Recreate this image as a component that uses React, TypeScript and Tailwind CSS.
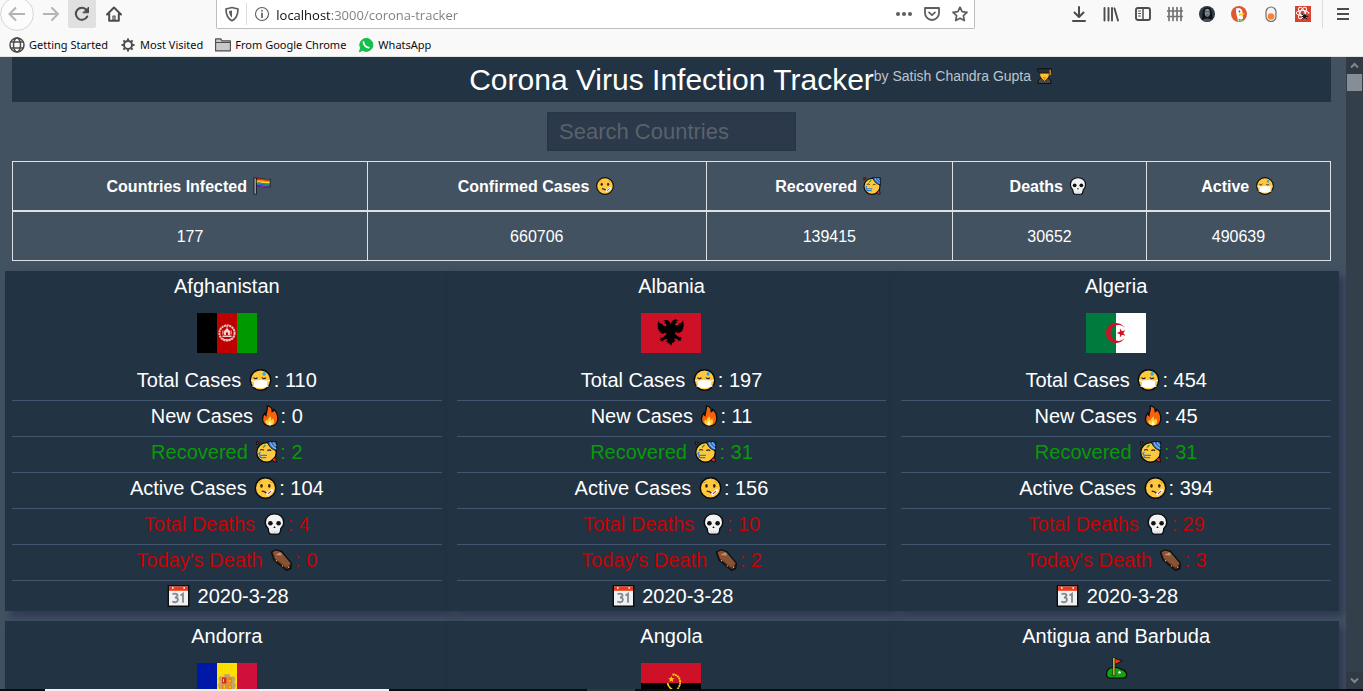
import { useState, type ReactNode } from 'react';

type EmojiName = 'mask' | 'fire' | 'party' | 'sick' | 'skull' | 'coffin' | 'calendar' | 'golf' | 'rainbow' | 'student';

const emojiArt: Record<EmojiName, ReactNode> = {
  mask: (
    <>
      <circle cx="11" cy="11" r="10.2" fill="#ffc83d" stroke="#0b0d10" strokeWidth="1.4" />
      <path d="M1.6 11.4 6 12.6M20.4 11.4 16 12.6M3 17l4 0.6M19 17l-4 0.6" stroke="#f6efe0" strokeWidth="1.3" />
      <path d="M4.400 12c4.200-1.500 9-1.500 13.200 0v4.600c-2 3.600-11.200 3.600-13.200 0z" fill="#fff" />
      <path d="M4 8.600c.8 1.400 3 1.400 3.900 0M12.400 8.600c.8 1.400 3 1.400 3.900 0" fill="none" stroke="#2a2320" strokeWidth="1.1" />
      <path d="M14.600 2.600c1.400 1.600 1.900 2.600 1.400 3.500-.6 1-2.200 1-2.800 0-.5-.9 0-1.900 1.400-3.500z" fill="#27a9e8" />
    </>
  ),
  fire: (
    <>
      <path d="M8.200.8c3.600.4 5.200 3.200 5 5.800 1-.4 1.500-1.200 1.600-2.200 2.800 2.400 4.200 6 4 9.400-.2 4.600-3.400 7.400-7.600 7.400s-7.600-2.800-7.700-7c-.1-2.600 1-4.600 2.300-6.200.1 1.200.5 2 1.200 2.500C6.800 7.400 9.400 4.200 8.200.8z" fill="#f7630c" stroke="#0b0d10" strokeWidth="1.300" />
      <path d="M11.300 11.200c1 1.400.9 2.600.9 3.600 1-.2 1.600-.8 1.900-1.600 1.600 2.800 1.300 7.300-3.200 7.300-3.700 0-5.300-2.800-3.900-5.900.4.7.8 1 1.500 1.200.2-1.900 1.600-3 2.800-4.600z" fill="#ffd23d" />
      <path d="M11 16c1.500 1.400 1.800 4.200 0 4.300-2 0-1.800-2.700 0-4.300z" fill="#fff4c2" />
    </>
  ),
  party: (
    <>
      <circle cx="11" cy="11.400" r="9.800" fill="#ffc83d" stroke="#0b0d10" strokeWidth="1.400" />
      <path d="M12 .8H21.200V9.600C16.800 9 13.400 5.600 12 .8z" fill="#2f6fc0" stroke="#0b0d10" strokeWidth="1" />
      <path d="M14.600 1.300c1 3.200 3.200 5.400 6.200 6.400M17.800 1.200c.5 1.800 1.600 2.900 3 3.500" fill="none" stroke="#7db7ef" strokeWidth="1.200" />
      <path d="M4.800 9.600c.7-1.500 2.800-1.500 3.500 0M12 10c.7-1.500 2.800-1.500 3.500 0" fill="none" stroke="#33261c" strokeWidth="1.200" />
      <path d="M11.500 14.400H5.400c-2.400 0-2.400-3-.4-3M5.400 14.400c-1.400.6-1 2.200.4 2.200h5" fill="none" stroke="#2f7fd2" strokeWidth="1.400" />
      <path d="m7.500 6.500 2.500-2.500" stroke="#2ea343" strokeWidth="1.500" />
      <path d="M.9.900 4 1.300 1.300 4zM16.800 18.300l3.300-2.300 1 5-3.200-.4z" fill="#df2a20" stroke="#0b0d10" strokeWidth=".9" />
    </>
  ),
  sick: (
    <>
      <circle cx="11" cy="11" r="10.200" fill="#ffc83d" stroke="#0b0d10" strokeWidth="1.400" />
      <ellipse cx="7" cy="8.800" rx="1.300" ry="1.900" fill="#2a2320" />
      <ellipse cx="14.800" cy="8.800" rx="1.300" ry="1.900" fill="#2a2320" />
      <path d="M3.800 6c1.400-.3 2.400-1 3-2M15 4c.6 1 1.600 1.700 3 2" fill="none" stroke="#d8952a" strokeWidth="1" />
      <path d="M7.200 14.200c1.900.1 3.300.6 4.800 2" fill="none" stroke="#33261c" strokeWidth="1.300" />
      <path d="m13.200 17 4.300-3.600" stroke="#f6f6f6" strokeWidth="3" strokeLinecap="round" />
      <path d="m13.400 16.800 3.100-2.600" stroke="#d8262c" strokeWidth="1.100" />
    </>
  ),
  skull: (
    <>
      <path d="M11 .9c5.600 0 9.200 3.600 9.200 8.300 0 2.700-.8 4.500-2.300 5.600-.7.5-.8 1.200-.8 2.200-.1 2.600-.8 4.100-2.900 4.100H7.800c-2.100 0-2.800-1.500-2.900-4.100 0-1-.1-1.700-.8-2.200-1.500-1.100-2.300-2.900-2.300-5.600C1.800 4.500 5.400.9 11 .9z" fill="#f2f2f2" stroke="#0b0d10" strokeWidth="1.400" />
      <circle cx="6.900" cy="10.200" r="2.300" fill="#111" />
      <circle cx="15.100" cy="10.200" r="2.300" fill="#111" />
      <path d="m11 13 1.200 2H9.800z" fill="#111" />
      <path d="M8.700 17.800v2.600M11 17.800v2.600M13.300 17.800v2.600" stroke="#c9ccd1" strokeWidth=".8" />
    </>
  ),
  coffin: (
    <>
      <path d="M1 3.200 5.600.9l5.600 1.800 9.600 11.400-.6 5.400-4.200 1.800L3.600 11z" fill="#4d2e1e" stroke="#0b0d10" strokeWidth="1.400" strokeLinejoin="round" />
      <path d="M2.200 3 5.800 1.500l5 1.700 9.400 11.300-4.400 3.900L4.400 9.200z" fill="#8a5234" />
      <path d="M6 5.800 11 4.600M9 3.800l1 3" stroke="#e08a7a" strokeWidth="1.400" />
      <path d="m9.800 6.200 1.800-.6" stroke="#41a84a" strokeWidth="1.300" />
      <path d="m5.500 11.400.9.600M11.500 16.700l.9.600M17.500 18.400l1-.5" stroke="#e6b45a" strokeWidth="1.300" />
    </>
  ),
  calendar: (
    <>
      <path d="M.8.800H21.200V21.200H.8z" fill="#f0f1f2" stroke="#0b0d10" strokeWidth="1.400" />
      <path d="M1.500 1.500h19V5.800h-19z" fill="#f03a17" />
      <path d="M4.500 2.200h1.600v1.600H4.500zM15.900 2.200h1.600v1.600h-1.600z" fill="#fff" />
      <path d="M5 9.300c2.600-1.500 5.600-.4 4.900 1.800-.3 1-1.300 1.400-2.500 1.400 1.700 0 3 .6 3 2.200 0 2.500-3.600 3.100-5.600 1.900M13 10.500l2.500-1.700v9" fill="none" stroke="#85898d" strokeWidth="1.800" />
    </>
  ),
  golf: (
    <>
      <path d="M1 17c0-4 2.500-6.600 7-6.400 3.600-.6 6 .6 8 1.800 3.300 1 5.100 3 5.100 5.400 0 2.200-1.500 3.400-4 3.400H5C2.300 21.200 1 19.700 1 17z" fill="#16a016" stroke="#0b0d10" strokeWidth="1.300" />
      <path d="M9.200 1.200 16.800 4 9.200 7.500z" fill="#ef3a1d" stroke="#0b0d10" strokeWidth=".9" />
      <ellipse cx="8" cy="18.300" rx="2.800" ry="1" fill="#0d6e1a" />
      <path d="M8.400.8v17" stroke="#0b0d10" strokeWidth="2.600" />
      <path d="M8.400 1v17" stroke="#f4d030" strokeWidth="1.400" />
      <circle cx="14" cy="15.400" r="1.200" fill="#fff" />
    </>
  ),
  rainbow: (
    <>
      <path d="M3 1.500c6-2.300 9 2 18.300.6V12.600c-8 1.600-11-2-18.300-.2z" fill="#0b0d10" />
      <path d="M3.500 3c6-2 9 1.700 17 .6" fill="none" stroke="#e5242a" strokeWidth="1.900" />
      <path d="M3.500 4.700c6-2 9 1.700 17 .6" fill="none" stroke="#f98b1d" strokeWidth="1.900" />
      <path d="M3.500 6.400c6-2 9 1.700 17 .6" fill="none" stroke="#fde331" strokeWidth="1.900" />
      <path d="M3.500 8.100c6-2 9 1.700 17 .6" fill="none" stroke="#16a73b" strokeWidth="1.900" />
      <path d="M3.500 9.800c6-2 9 1.700 17 .6" fill="none" stroke="#2a6ae0" strokeWidth="1.900" />
      <path d="M3.500 11.400c6-2 9 1.700 17 .6" fill="none" stroke="#8b2fb0" strokeWidth="1.400" />
      <path d="M2.600.6V21.400" stroke="#0b0d10" strokeWidth="3.800" />
      <path d="M2.600 1.400V20.600" stroke="#c3c8cd" strokeWidth="1.500" />
    </>
  ),
  student: (
    <>
      <path d="M2 21.300c0-4 1.200-6.500 4.600-7.800h8.800c3.400 1.300 4.600 3.800 4.600 7.800z" fill="#45484b" stroke="#0b0d10" strokeWidth="1.300" />
      <path d="M4.600 5.500h12.800v5.300c-1.400 3-3.600 5.400-6.400 7.400-2.800-2-5-4.400-6.400-7.400z" fill="#ffc22e" stroke="#0b0d10" strokeWidth=".8" />
      <path d="M1.500 1h19v3.200L16.800 7H5.200L1.500 4.200z" fill="#2b2e30" stroke="#0b0d10" strokeWidth="1.200" />
      <path d="M18.800 2.500v7" stroke="#e8a51c" strokeWidth="1.600" />
      <path d="m8.500 12.500 2.500 5 2.500-5z" fill="#e98f0c" />
    </>
  ),
};

const emojiSizes = {
  sm: 'inline-block h-4 w-[19px] align-[-3px]',
  md: 'inline-block h-[18px] w-[22px] align-[-3px]',
  lg: 'inline-block h-[22px] w-[27px] align-[-4px]',
  lgNarrow: 'inline-block h-[22px] w-[22px] align-[-4px]',
};

function Emoji({ name, size }: { name: EmojiName; size: keyof typeof emojiSizes }) {
  return (
    <svg viewBox="0 0 22 22" className={emojiSizes[size]} aria-hidden="true">
      {emojiArt[name]}
    </svg>
  );
}

/* ---------- Flags ---------- */

function Flag({ children }: { children: ReactNode }) {
  return (
    <svg viewBox="0 0 60 40" className="my-3 block h-10 w-[60px]" aria-hidden="true">
      {children}
    </svg>
  );
}

const star = (cx: number, cy: number, r: number, rot: number) =>
  Array.from({ length: 10 }, (_, i) => {
    const a = ((i * 36 + rot) * Math.PI) / 180;
    const d = i % 2 === 0 ? r : r * 0.4;
    return `${(cx + d * Math.cos(a)).toFixed(2)},${(cy + d * Math.sin(a)).toFixed(2)}`;
  }).join(' ');

const afghanistan = (
  <Flag>
    <path d="M0 0h20v40H0z" fill="#000" />
    <path d="M20 0h20v40H20z" fill="#bf0000" />
    <path d="M40 0h20v40H40z" fill="#009900" />
    <circle cx="30" cy="20" r="7.600" fill="none" stroke="#f0c4c0" strokeWidth="2" strokeDasharray="2.200 .5" />
    <path d="M25.500 22.500h9v1.600h-9zM27 22v-4l3-3 3 3v4h-2v-2.500h-2V22zM29.600 13h.8v2.500h-.8zM25.400 17.500h1v4h-1zM33.600 17.500h1v4h-1z" fill="#f3cfcb" />
    <path d="M26 25.800c2.500 1.400 5.500 1.400 8 0" fill="none" stroke="#f3cfcb" />
  </Flag>
);

const albania = (
  <Flag>
    <path d="M0 0h60v40H0z" fill="#ce1126" />
    <g transform="translate(30 20) scale(1.200 1.140) translate(-30 -18.800)">
      <path
        d="M30 12c-.5-2.500-1.500-4.300-4-4.600-1.300-.1-2 .5-2.300 1.200 1.200-.2 2 .2 2.100.9-.7-.2-1.300 0-1.700.6 1.500.2 2.300 1 2.100 2.200-1.300 1-3.200.4-3.400-1.300-2-.4-3.100-1.500-3.200-3-.6 1.200-.5 2.200.1 3l-1-.3c0 .9.400 1.500.9 2l-1 .1c.2.800.7 1.300 1.300 1.600l-1.100.4c.4.700.9 1 1.600 1.100l-1.100.8c.6.500 1.200.6 1.900.5l-.9 1.200c.8.100 1.400 0 2-.4l-.6 1.500c.9-.1 1.500-.6 1.900-1.200l-.1 1.500c.8-.4 1.100-1 1.300-1.700l.6 1.400c.5-.5.6-1 .6-1.600.6.9.3 2-.6 2.900l-2.600 2.300-1.900-.5.8 1.500-1.600.2 1.600.8-.6 1.300 1.600-.8.600 1.100.6-1.700 3-1.200-.3 1.800-1.400.8 2.100.3-.3 1.500 1.400-.7L30 30l1.200-3 1.400.7-.3-1.500 2.100-.3-1.400-.8-.3-1.800 3 1.200.6 1.700.6-1.100 1.600.8-.6-1.300 1.600-.8-1.600-.2.800-1.500-1.900.5-2.600-2.300c-.9-.9-1.200-2-.6-2.900 0 .6.100 1.100.6 1.600l.6-1.400c.2.700.5 1.300 1.300 1.700l-.1-1.500c.4.600 1 1.100 1.900 1.200l-.6-1.500c.6.400 1.200.5 2 .4l-.9-1.200c.7.100 1.300 0 1.900-.5l-1.100-.8c.7-.1 1.200-.4 1.600-1.100l-1.100-.4c.6-.3 1.100-.8 1.300-1.600l-1-.1c.5-.5.900-1.100.9-2l-1 .3c.6-.8.7-1.800.1-3-.1 1.500-1.200 2.600-3.200 3-.2 1.700-2.100 2.300-3.400 1.300-.2-1.200.6-2 2.100-2.200-.4-.6-1-.8-1.700-.6.1-.7.900-1.100 2.100-.9-.3-.7-1-1.300-2.300-1.200-2.500.3-3.500 2.100-4 4.600z"
        fill="#000"
      />
    </g>
  </Flag>
);

const algeria = (
  <Flag>
    <path d="M0 0h30v40H0z" fill="#007a3d" />
    <path d="M30 0h30v40H30z" fill="#fff" />
    <path d="M38.700 15a10 10 0 1 0 0 10 8 8 0 1 1 0-10z" fill="#ce1126" />
    <polygon points={star(35.4, 20, 4.8, 180)} fill="#ce1126" />
  </Flag>
);

const andorra = (
  <Flag>
    <path d="M0 0h20v40H0z" fill="#0018a8" />
    <path d="M20 0h20v40H20z" fill="#fedf00" />
    <path d="M40 0h20v40H40z" fill="#d0103a" />
    <path d="M23 13l3 1 2-3h4l2 3 3-1 1.500 3-1.200 3 1.700 3-1.500 5-4 4h-7l-4-4-1.500-5 1.700-3-1.200-3z" fill="#c6a46a" />
    <path d="M25 14.500h4.500v6H25z" fill="#d52b1e" />
    <path d="M30.500 14.500H35v6h-4.500zM25 21.500h4.500v5H25zM30.500 21.500H35v5h-4.500z" fill="#e8841a" />
    <path d="M26.500 16v3M31.500 18H34M27.200 22v4M32 24h2" stroke="#fedf00" />
  </Flag>
);

const angola = (
  <Flag>
    <path d="M0 0h60v20H0z" fill="#ce1126" />
    <path d="M0 20h60v20H0z" fill="#000" />
    <path d="M31.500 11.500c5.800 0 8 4.500 7.600 9-.4 3-2 5.600-4.600 7" fill="none" stroke="#f9d616" strokeWidth="1.800" strokeDasharray="2 .5" />
    <path d="M26.500 20c.8 4.500 5 8 10.500 8.200" fill="none" stroke="#f9d616" strokeWidth="1.600" />
    <polygon points={star(30.3, 16.3, 3.4, -90)} fill="#f9d616" />
  </Flag>
);

/* ---------- Browser toolbar ---------- */

function ToolButton({ label, className = '', children }: { label: string; className?: string; children: ReactNode }) {
  return (
    <button type="button" aria-label={label} className={`flex h-7 shrink-0 items-center justify-center text-[#4c4c4f] ${className}`}>
      {children}
    </button>
  );
}

function Glyph({ children }: { children: ReactNode }) {
  return (
    <svg viewBox="0 0 16 16" className="size-4 shrink-0" fill="none" stroke="currentColor" strokeWidth="2" strokeLinecap="round" strokeLinejoin="round" aria-hidden="true">
      {children}
    </svg>
  );
}

const extensions: { label: string; art: ReactNode }[] = [
  { label: 'Downloads', art: <path d="M8 1v9M3.500 6.500 8 11l4.500-4.500M2 15h12" /> },
  { label: 'Library', art: <path d="M1.500 2v12.500M5.500 2v12.500M9 2v12.500M11.500 2.500l3.500 12" strokeWidth="1.900" /> },
  {
    label: 'Sidebars',
    art: (
      <>
        <rect x="1" y="2" width="14" height="12" rx="2" strokeWidth="1.900" />
        <path d="M8 2v12" strokeWidth="1.500" />
        <path d="M3.500 5h2M3.500 7.500h2M3.500 10h2" strokeWidth="1" />
      </>
    ),
  },
  { label: 'Containers', art: <path d="M2 1.500v13M6 1.500v13M10 1.500v13M14 1.500v13M.5 5h15M.5 10.500h15" stroke="#737376" strokeWidth="1.700" /> },
  {
    label: 'Profile',
    art: (
      <g stroke="none">
        <circle cx="8" cy="8" r="8" fill="#2d3b46" />
        <path d="M3 14C3.500 9 3 2 8 1.500s5 6 5.500 11.500z" fill="#0e1216" />
        <ellipse cx="8.300" cy="6.800" rx="2.600" ry="4" fill="#8b9092" />
        <path d="M6.500 5.800h1.400M9 5.800h1.400M7.500 8.900h1.800" stroke="#30373c" strokeWidth=".8" />
        <path d="M3.500 14.200c1.400-2.400 7-2.400 9 0-2.600 2-6.400 2-9 0z" fill="#42505a" />
      </g>
    ),
  },
  {
    label: 'DuckDuckGo',
    art: (
      <g stroke="none">
        <circle cx="8" cy="8" r="8" fill="#de5833" />
        <path d="M5 2.500c3-1.500 6 0 6.500 3.500l.5 7.500c-1.500 1.500-3.500 2-5 1.500C6.500 11 4.500 7 5 2.500z" fill="#fff" />
        <circle cx="8.500" cy="5.500" r=".9" fill="#2d4f8e" />
        <path d="M8 8c2-.8 4-1 6-.4-1.500 1.600-4 2.400-6 2.200z" fill="#fdd20a" />
        <path d="m7.500 12.500 2.500 1 2.500-1v2.600l-2.500-.7-2 .8z" fill="#4cba3c" />
      </g>
    ),
  },
  {
    label: 'Toggle',
    art: (
      <>
        <rect x="3" y="1" width="10" height="14.500" rx="5" stroke="#6d6d70" strokeWidth="1.200" fill="#f4f4f5" />
        <circle cx="8" cy="10.500" r="3.300" fill="#fb8332" stroke="none" />
      </>
    ),
  },
  {
    label: 'React Developer Tools',
    art: (
      <>
        <path d="M0 0h16v16H0z" fill="#d8402f" stroke="none" />
        <g stroke="#fff" strokeWidth="1">
          <ellipse cx="7.500" cy="7" rx="6.300" ry="2.500" />
          <ellipse cx="7.500" cy="7" rx="6.300" ry="2.500" transform="rotate(60 7.500 7)" />
          <ellipse cx="7.500" cy="7" rx="6.300" ry="2.500" transform="rotate(120 7.500 7)" />
        </g>
        <path d="M7 8l5 5M12.500 8l-5 5M7 10.500h5.500" stroke="#231615" strokeWidth="1" />
        <ellipse cx="9.800" cy="10.500" rx="1.900" ry="2.500" fill="#231615" stroke="none" />
      </>
    ),
  },
];

const bookmarks: { label: string; icon: ReactNode }[] = [
  {
    label: 'Getting Started',
    icon: (
      <Glyph>
        <g strokeWidth="1.500">
          <circle cx="8" cy="8" r="7" />
          <ellipse cx="8" cy="8" rx="3.500" ry="7" />
          <path d="M2 5h12M2 11h12" />
        </g>
      </Glyph>
    ),
  },
  {
    label: 'Most Visited',
    icon: (
      <Glyph>
        <circle cx="8" cy="8" r="4" />
        <path d="M8 1.500v2M8 12.500v2M1.500 8h2M12.500 8h2M3.400 3.400l1.400 1.400M11.200 11.200l1.400 1.400M12.600 3.400l-1.400 1.400M4.800 11.200l-1.400 1.400" strokeLinecap="butt" />
      </Glyph>
    ),
  },
  {
    label: 'From Google Chrome',
    icon: (
      <Glyph>
        <path d="M.6 1.900h5.200l1.200 2h8.400v10H.6z" fill="#c9c9cb" strokeWidth="1.100" />
        <path d="M.8 5.500h14.400" strokeWidth="1" />
      </Glyph>
    ),
  },
  {
    label: 'WhatsApp',
    icon: (
      <Glyph>
        <path d="M1.500 14.500 2.600 11A6.500 6.500 0 1 1 5 13.500z" fill="#12bf47" stroke="#12bf47" strokeWidth="1" />
        <path d="M5.500 5.200c.2 2.600 2.600 5 5.200 5.400" stroke="#fff" strokeWidth="1.900" />
      </Glyph>
    ),
  },
];

function BrowserChrome() {
  return (
    <div className="shrink-0 border-b border-[#e3e6e1] bg-[#f9f9fa]">
      <div className="flex h-[30px] items-start">
        <ToolButton label="Back" className="w-[34px]">
          <svg viewBox="0 0 34 34" className="-my-1 size-[34px] shrink-0" fill="none" aria-hidden="true">
            <circle cx="17" cy="17" r="16.400" fill="#fcfcfc" stroke="#d5d5d7" />
            <path d="M25 17H10M16 10.500 9.500 17l6.500 6.500" stroke="#b4b4b6" strokeWidth="2" />
          </svg>
        </ToolButton>
        <ToolButton label="Forward" className="w-[34px]">
          <Glyph>
            <path d="M0 8h15M9 2l6 6-6 6" stroke="#b4b4b6" />
          </Glyph>
        </ToolButton>
        <ToolButton label="Reload" className="w-7 rounded-b-[2px] bg-[#e0e0e1]">
          <Glyph>
            <path d="M13.200 10.500A6 6 0 1 1 12.500 4" />
            <path d="M14.500 1.500v5.300H9.200z" fill="currentColor" strokeWidth="1" />
          </Glyph>
        </ToolButton>
        <ToolButton label="Home" className="-mr-1 w-9">
          <Glyph>
            <path d="M1 8.500 8 1.500l7 7M3.200 8v6.800h9.600V8" />
            <path d="M7 10h2v4H7z" strokeWidth="1.200" />
          </Glyph>
        </ToolButton>
        <div className="flex-[2]" />
        <div className="flex h-[29px] flex-[17] items-center rounded-b-[2px] border border-t-0 border-[#bdbdbf] bg-white pr-1.5 text-[#5e5e61]">
          <span className="flex w-[29px] justify-center">
            <Glyph>
              <path d="M8 1.500 14 3c0 5.500-1.500 9.500-6 11.800C3.500 12.500 2 8.500 2 3z" strokeWidth="1.700" />
              <path d="M8 4.500v7.200C6 10 5.200 8 5 5z" fill="currentColor" stroke="none" />
            </Glyph>
          </span>
          <span className="h-[22px] w-px bg-[#dededf]" />
          <span className="flex w-[29px] justify-center">
            <Glyph>
              <circle cx="8" cy="8" r="6.500" strokeWidth="1.100" />
              <path d="M8 7.300v4M8 4.700v.1" strokeWidth="1.700" />
            </Glyph>
          </span>
          <input
            type="text"
            aria-label="Address"
            defaultValue="localhost:3000/corona-tracker"
            className="min-w-0 flex-1 bg-[linear-gradient(90deg,#0c0c0d_54px,#7c7c80_54px)] bg-clip-text pt-0.5 font-['Open_Sans',sans-serif] text-[13px] leading-5 text-transparent outline-none"
          />
          <div className="flex gap-3">
            <button type="button" aria-label="Page actions">
              <Glyph>
                <g fill="currentColor" stroke="none">
                  <circle cx="2" cy="8" r="2" />
                  <circle cx="8" cy="8" r="2" />
                  <circle cx="14" cy="8" r="2" />
                </g>
              </Glyph>
            </button>
            <button type="button" aria-label="Save to Pocket">
              <Glyph>
                <path d="M1 2h14v5a7 7 0 0 1-14 0z" strokeWidth="1.800" />
                <path d="M5 6.300 8 9.200l3-2.900" strokeWidth="1.700" />
              </Glyph>
            </button>
            <button type="button" aria-label="Bookmark this page">
              <Glyph>
                <path d="m8 1.200 2.100 4.500 4.900.6-3.600 3.400.9 4.900L8 12.200l-4.300 2.400.9-4.900L1 6.300l4.900-.6z" strokeWidth="1.700" />
              </Glyph>
            </button>
          </div>
        </div>
        <div className="flex-[2]" />
        {extensions.map((e) => (
          <ToolButton key={e.label} label={e.label} className="w-8">
            <Glyph>{e.art}</Glyph>
          </ToolButton>
        ))}
        <ToolButton label="Menu" className="ml-[3px] w-[41px] border-l border-[#dcdcdd]">
          <svg viewBox="0 0 12 12" className="size-3" stroke="currentColor" strokeWidth="2" aria-hidden="true">
            <path d="M0 1h12M0 6h12M0 11h12" />
          </svg>
        </ToolButton>
      </div>
      <nav className="flex h-[26px] items-center gap-3 pt-[3px] pl-[9px] font-['Noto_Sans',sans-serif]">
        {bookmarks.map((b) => (
          <a key={b.label} href="#" className="flex items-center gap-1 text-[11px] leading-4 whitespace-nowrap text-[#0c0c0d]">
            <span className="text-[#4c4c4f]">{b.icon}</span>
            {b.label}
          </a>
        ))}
      </nav>
    </div>
  );
}

/* ---------- Tracker page ---------- */

const totals: { label: string; emoji: EmojiName; value: number }[] = [
  { label: 'Countries Infected', emoji: 'rainbow', value: 177 },
  { label: 'Confirmed Cases', emoji: 'sick', value: 660706 },
  { label: 'Recovered', emoji: 'party', value: 139415 },
  { label: 'Deaths', emoji: 'skull', value: 30652 },
  { label: 'Active', emoji: 'mask', value: 490639 },
];

type Country = { name: string; flag?: ReactNode; stats: number[] };

const countries: Country[] = [
  { name: 'Afghanistan', flag: afghanistan, stats: [110, 0, 2, 104, 4, 0] },
  { name: 'Albania', flag: albania, stats: [197, 11, 31, 156, 10, 2] },
  { name: 'Algeria', flag: algeria, stats: [454, 45, 31, 394, 29, 3] },
  { name: 'Andorra', flag: andorra, stats: [] },
  { name: 'Angola', flag: angola, stats: [] },
  { name: 'Antigua and Barbuda', stats: [] },
];

const statRows: { label: string; emoji: EmojiName; size: keyof typeof emojiSizes; color: string }[] = [
  { label: 'Total Cases', emoji: 'mask', size: 'lg', color: 'text-white' },
  { label: 'New Cases', emoji: 'fire', size: 'lgNarrow', color: 'text-white' },
  { label: 'Recovered', emoji: 'party', size: 'lg', color: 'text-[#089a08]' },
  { label: 'Active Cases', emoji: 'sick', size: 'lg', color: 'text-white' },
  { label: 'Total Deaths', emoji: 'skull', size: 'lg', color: 'text-[#c40404]' },
  { label: "Today's Death", emoji: 'coffin', size: 'lg', color: 'text-[#c40404]' },
];

function CountryCard({ country }: { country: Country }) {
  return (
    <article className="bg-[#223343] pr-2 pl-[7px] text-center text-xl leading-[30px] text-white shadow-[5px_5px_8px_#2e3853]">
      <h2>{country.name}</h2>
      <div className="flex justify-center">
        {country.flag ?? (
          <span className="h-[33px] pt-0.5">
            <Emoji name="golf" size="lg" />
          </span>
        )}
      </div>
      {country.stats.map((value, i) => (
        <p key={statRows[i].label} className={`border-b border-[#42566f] pb-[5px] ${statRows[i].color}`}>
          {statRows[i].label} <Emoji name={statRows[i].emoji} size={statRows[i].size} />: {value}
        </p>
      ))}
      {country.stats.length > 0 && (
        <p>
          <Emoji name="calendar" size="lg" /> 2020-3-28
        </p>
      )}
    </article>
  );
}

function Scrollbar() {
  return (
    <div className="flex w-[17px] shrink-0 flex-col items-center justify-between bg-[#353f4b]" aria-hidden="true">
      <div className="flex flex-col items-center">
        <svg viewBox="0 0 17 17" className="size-[17px] bg-[#303944]" fill="none" stroke="#7d8793" strokeWidth="2">
          <path d="m5 10.500 3.500-3.500 3.500 3.500" />
        </svg>
        <div className="h-[17px] w-[15px] bg-[#858d97]" />
      </div>
      <svg viewBox="0 0 17 17" className="size-[17px] bg-[#303944]" fill="none" stroke="#7d8793" strokeWidth="2">
        <path d="m5 6.500 3.500 3.500 3.500-3.500" />
      </svg>
    </div>
  );
}

export default function App() {
  const [query, setQuery] = useState('');
  const shown = countries.filter((c) => c.name.toLowerCase().includes(query.toLowerCase()));

  return (
    <div className="flex h-screen flex-col overflow-hidden">
      <BrowserChrome />
      <div className="flex min-h-0 flex-1 bg-[#435261] font-['Liberation_Sans',Arial,sans-serif] text-white">
        <main className="min-w-0 flex-1 overflow-hidden">
          <div className="mr-[15px] ml-3 flex flex-col items-center gap-2.5">
            <header className="grid w-full grid-cols-[1fr_auto_1fr] bg-[#223343]">
              <h1 className="col-start-2 text-3xl leading-[45px]">Corona Virus Infection Tracker</h1>
              <p className="text-sm leading-[38px] text-[#bfc4c9]">
                by Satish Chandra Gupta <Emoji name="student" size="sm" />
              </p>
            </header>
            <input
              type="text"
              aria-label="Search Countries"
              placeholder="Search Countries"
              value={query}
              onChange={(e) => setQuery(e.target.value)}
              className="h-[39px] w-[249px] border-2 border-[#283747] bg-[#2b394a] px-2.5 text-[22px] outline-none placeholder:text-[#59626c]"
            />
            <table className="w-full border-collapse text-center text-base leading-6">
              <thead>
                <tr>
                  {totals.map((t) => (
                    <th key={t.label} scope="col" className="border border-b-2 border-[#dee2e6] px-3 pt-[13px] pb-[11px] font-bold whitespace-nowrap">
                      {t.label} <Emoji name={t.emoji} size="md" />
                    </th>
                  ))}
                </tr>
              </thead>
              <tbody>
                <tr>
                  {totals.map((t) => (
                    <td key={t.label} className="border border-[#dee2e6] px-3 pt-[13px] pb-[11px]">
                      {t.value}
                    </td>
                  ))}
                </tr>
              </tbody>
            </table>
          </div>
          <section className="mt-2.5 mr-[7px] ml-[5px] grid grid-cols-3 gap-y-2.5">
            {shown.map((c) => (
              <CountryCard key={c.name} country={c} />
            ))}
          </section>
        </main>
        <Scrollbar />
      </div>
      <div className="flex h-0.5 shrink-0 bg-[#0a0d0c]" aria-hidden="true">
        <div className="ml-[45px] w-[344px] bg-[#f1f1f1]" />
        <div className="ml-[198px] w-12 bg-[#33383b]" />
      </div>
    </div>
  );
}
